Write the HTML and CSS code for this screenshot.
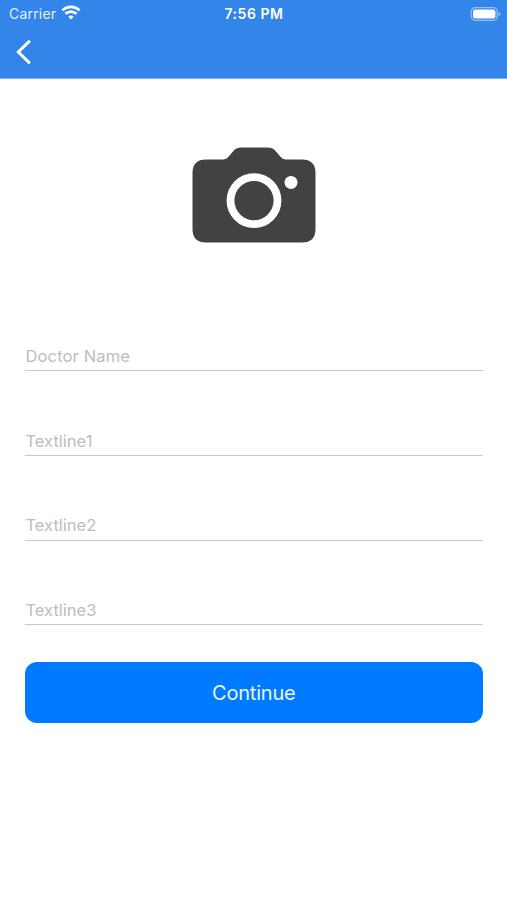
FILE: index.html
```html
<!DOCTYPE html>
<html lang="en">
<head>
<meta charset="utf-8">
<meta name="viewport" content="width=device-width, initial-scale=1">
<title>Doctor profile</title>
<link rel="stylesheet" href="styles.css">
</head>
<body>
<header class="top">
  <div class="status">
    <div class="carrier"><span class="carrier-name">Carrier</span>
      <svg class="wifi" width="20" height="15" viewBox="0 0 20 15" fill="none" stroke="#fff" stroke-width="2.7">
        <path d="M1.4 5.4a12.4 12.4 0 0 1 17.2 0"/>
        <path d="M4.5 8.8a7.9 7.9 0 0 1 11 0"/>
        <path d="M10 14.500l-2.700-2.800a3.900 3.900 0 0 1 5.400 0z" fill="#fff" stroke="none"/>
      </svg>
    </div>
    <div class="time">7:56 PM</div>
    <svg class="battery" width="31" height="14" viewBox="0 0 31 14">
      <rect x="1.2" y=".7" width="26" height="12.6" rx="4" fill="none" stroke="#fff" stroke-opacity=".5" stroke-width="1.2"/>
      <rect x="3" y="2.5" width="22.4" height="9" rx="2.3" fill="#fff"/>
      <path d="M28.7 4.800c2.200.8 2.200 3.600 0 4.400z" fill="#fff" fill-opacity=".5"/>
    </svg>
  </div>
  <nav class="nav">
    <svg width="16" height="26" viewBox="0 0 16 26" fill="none" stroke="#fff" stroke-width="3" stroke-linecap="round" stroke-linejoin="round"><path d="M14 2.700L3.200 13l10.800 10.300"/></svg>
  </nav>
</header>
<main class="content">
  <svg class="camera" width="124" height="96" viewBox="0 0 124 96">
    <path fill="#424242" d="M14 12.500H30C34 12.500 35.500 11 38 8L41 4.400C43.500 1.500 46 .5 50 .5H75C79 .5 81.500 1.500 84 4.400L87 8C89.500 11 91 12.500 95 12.500H110Q123.500 12.500 123.500 26V82Q123.500 95.500 110 95.500H14Q.5 95.500 .5 82V26Q.5 12.500 14 12.500Z"/>
    <circle cx="62" cy="53.600" r="23.500" fill="none" stroke="#fff" stroke-width="7.800"/>
    <circle cx="99" cy="35.400" r="6.500" fill="#fff"/>
  </svg>
  <form class="form">
    <div class="field name">Doctor Name</div>
    <div class="field">Textline1</div>
    <div class="field">Textline2</div>
    <div class="field">Textline3</div>
    <button class="continue" type="button">Continue</button>
  </form>
</main>
</body>
</html>
```
FILE: styles.css
```css
* { box-sizing: border-box; }
body {
  margin: 0;
  min-height: 900px;
  background: #fff;
  font-family: Inter, "Liberation Sans", sans-serif;
}
.top {
  height: 79px;
  background: #3385e9;
  border-bottom: 1px solid #71b3f5;
  color: #fff;
}
.status {
  display: grid;
  grid-template-columns: 1fr auto 1fr;
  align-items: center;
  height: 27px;
  padding: 0 6px 0 9px;
}
.carrier {
  display: flex;
  align-items: center;
  gap: 5px;
  font-size: 14px;
  color: #e3f1ff;
  letter-spacing: .2px;
}
.wifi { margin-top: -2px; }
.time {
  margin-left: -2px;
  font-size: 14px;
  font-weight: 600;
  letter-spacing: .55px;
}
.battery { justify-self: end; }
.nav { padding-left: 15px; height: 51px; }
.nav svg { display: block; margin-top: 12px; }
.content {
  display: flex;
  flex-direction: column;
  padding: 68px 24.5px 0 25px;
}
.camera { align-self: center; }
.form { padding-top: 98px; }
.field {
  height: 30.4px;
  margin-bottom: 54.2px;
  padding-left: .5px;
  border-bottom: 1px solid #cacaca;
  color: #bdbdbd;
  font-size: 16.5px;
  line-height: 31px;
}
.name { letter-spacing: .15px; }
.field:nth-child(4) { margin-bottom: 36.8px; }
.continue {
  display: block;
  width: 100%;
  height: 61px;
  padding-top: 2px;
  border: 0;
  border-radius: 12px;
  background: #007aff;
  color: #e8f6ff;
  font: 400 20px Inter, "Liberation Sans", sans-serif;
  letter-spacing: -.2px;
}
```
